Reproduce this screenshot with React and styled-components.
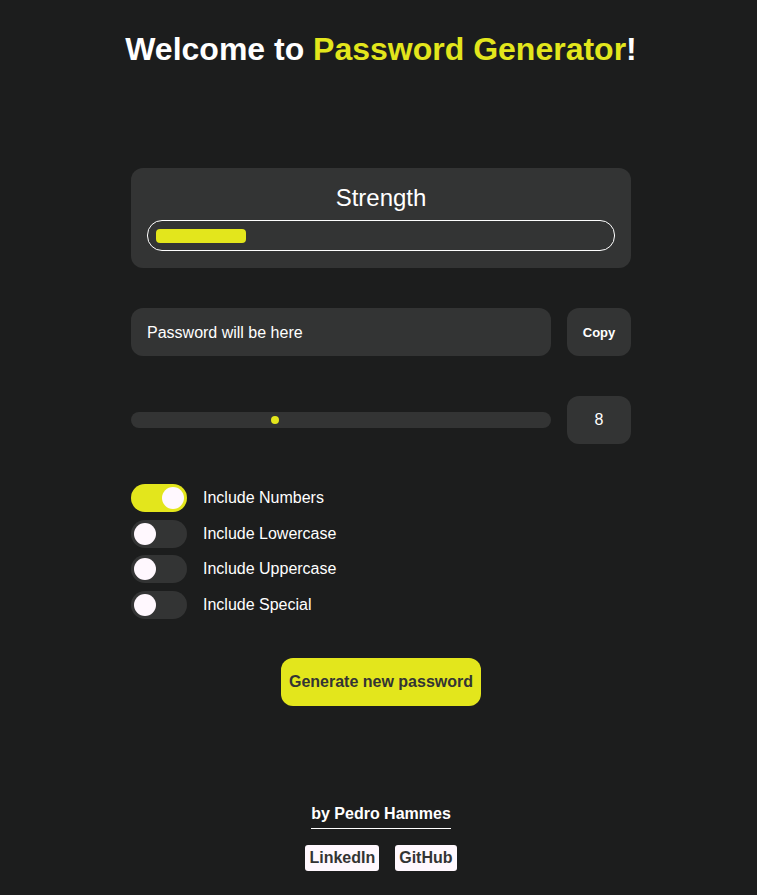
import styled, { createGlobalStyle } from "styled-components";

const GlobalStyle = createGlobalStyle`
  html, body {
    margin: 0;
    padding: 0;
    background: #1c1d1d;
    font-family: "Liberation Sans", Arial, sans-serif;
    color: #ffffff;
  }
`;

const Page = styled.main`
  display: flex;
  flex-direction: column;
  align-items: center;
  padding: 31px 0 0 5px;
  min-height: 895px;
  box-sizing: border-box;
`;

const Title = styled.h1`
  margin: 0;
  font-size: 32px;
  font-weight: 700;
  line-height: 37px;
  span {
    color: #e3e61c;
  }
`;

const Container = styled.section`
  width: 500px;
  margin-top: 100px;
  display: flex;
  flex-direction: column;
`;

const StrengthCard = styled.div`
  background: #333434;
  border-radius: 12px;
  padding: 16px;
  height: 100px;
  box-sizing: border-box;
  display: flex;
  flex-direction: column;
  align-items: center;
  h2 {
    margin: 0;
    font-size: 24px;
    font-weight: 400;
    line-height: 28px;
  }
`;

const Meter = styled.div`
  margin-top: 8px;
  width: 100%;
  height: 31px;
  box-sizing: border-box;
  border: 1px solid #ffffff;
  border-radius: 15px;
  padding: 8px;
`;

const MeterFill = styled.div`
  height: 14px;
  border-radius: 4px;
  background: #e3e61c;
`;

const Row = styled.div`
  display: flex;
  gap: 16px;
  align-items: center;
  margin-top: ${(p) => p.$top}px;
`;

const Field = styled.div`
  flex: 1;
  height: 48px;
  background: #333434;
  border-radius: 12px;
  display: flex;
  align-items: center;
  padding: 1px 16px 0;
  box-sizing: border-box;
  font-size: 16px;
`;

const Box = styled.button`
  width: 64px;
  height: 48px;
  border: none;
  border-radius: 12px;
  background: #333434;
  color: #ffffff;
  font-family: inherit;
  font-size: ${(p) => (p.$bold ? "13px" : "16px")};
  font-weight: ${(p) => (p.$bold ? 700 : 400)};
  padding: 0;
`;

const Track = styled.div`
  flex: 1;
  height: 16px;
  border-radius: 8px;
  background: #333434;
  position: relative;
`;

const Thumb = styled.span`
  position: absolute;
  top: 4px;
  width: 8px;
  height: 8px;
  border-radius: 50%;
  background: #e3e61c;
`;

const Options = styled.div`
  margin-top: 40px;
  display: flex;
  flex-direction: column;
  gap: 7.67px;
`;

const Option = styled.label`
  display: flex;
  align-items: center;
  gap: 16px;
  font-size: 16px;
  height: 28px;
`;

const Switch = styled.span`
  width: 56px;
  height: 28px;
  border-radius: 14px;
  background: ${(p) => (p.$on ? "#e3e61c" : "#333434")};
  display: flex;
  align-items: center;
  justify-content: ${(p) => (p.$on ? "flex-end" : "flex-start")};
  padding: 0 3px;
  box-sizing: border-box;
  &::after {
    content: "";
    width: 22px;
    height: 22px;
    border-radius: 50%;
    background: #fff8fe;
  }
`;

const Generate = styled.button`
  align-self: center;
  margin-top: 39px;
  width: 200px;
  height: 48px;
  border: none;
  border-radius: 12px;
  background: #e3e61c;
  color: #333434;
  font-family: inherit;
  font-size: 16px;
  font-weight: 700;
`;

const Footer = styled.footer`
  margin-top: 99px;
  display: flex;
  flex-direction: column;
  align-items: center;
`;

const Author = styled.p`
  margin: 0;
  font-size: 16px;
  font-weight: 700;
  line-height: 18px;
  padding-bottom: 5px;
  border-bottom: 1px solid #ffffff;
`;

const Links = styled.nav`
  display: flex;
  gap: 16px;
  margin-top: 16px;
`;

const LinkButton = styled.a`
  background: #fff8fe;
  color: #333434;
  font-size: 16px;
  font-weight: 700;
  text-decoration: none;
  padding: 4px;
  border-radius: 3px;
  line-height: 18px;
`;

const options = [
  { label: "Include Numbers", on: true },
  { label: "Include Lowercase", on: false },
  { label: "Include Uppercase", on: false },
  { label: "Include Special", on: false },
];

const App = () => {
  const length = 8;
  return (
    <>
      <GlobalStyle />
      <Page>
        <Title>
          Welcome to <span>Password Generator</span>!
        </Title>
        <Container>
          <StrengthCard>
            <h2>Strength</h2>
            <Meter>
              <MeterFill style={{ width: "20%" }} />
            </Meter>
          </StrengthCard>
          <Row $top={40}>
            <Field>Password will be here</Field>
            <Box $bold>Copy</Box>
          </Row>
          <Row $top={40}>
            <Track>
              <Thumb style={{ left: 140 }} />
            </Track>
            <Box>{length}</Box>
          </Row>
          <Options>
            {options.map((o) => (
              <Option key={o.label}>
                <Switch $on={o.on} />
                {o.label}
              </Option>
            ))}
          </Options>
          <Generate>Generate new password</Generate>
        </Container>
        <Footer>
          <Author>by Pedro Hammes</Author>
          <Links>
            <LinkButton href="#">LinkedIn</LinkButton>
            <LinkButton href="#">GitHub</LinkButton>
          </Links>
        </Footer>
      </Page>
    </>
  );
};

export default App;
